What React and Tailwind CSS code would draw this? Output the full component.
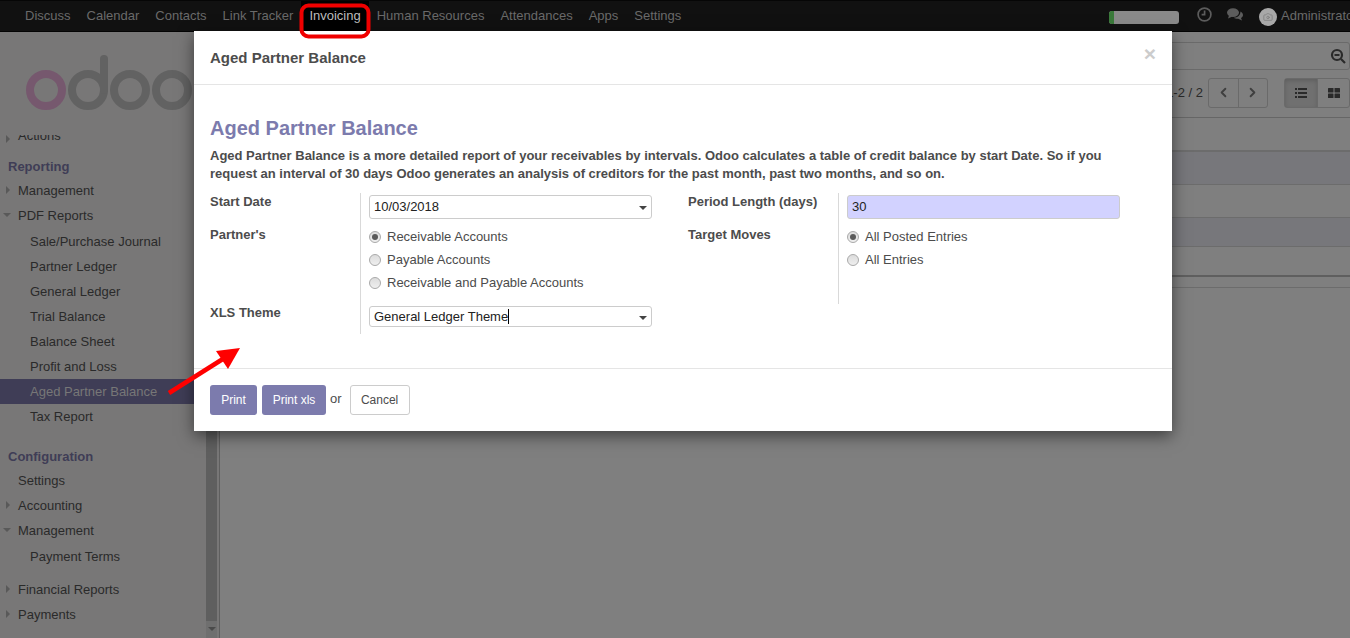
import React from "react";
import { ChevronLeft, ChevronRight, Camera } from "lucide-react";

const nav = ["Discuss","Calendar","Contacts","Link Tracker","Invoicing","Human Resources","Attendances","Apps","Settings"];

function Caret({ open }) {
  return open ? (
    <span className="absolute left-[3px] top-[10px] w-0 h-0 border-x-[4px] border-x-transparent border-t-[4px] border-t-[#595959]" />
  ) : (
    <span className="absolute left-[6px] top-[8px] w-0 h-0 border-y-[4px] border-y-transparent border-l-[4px] border-l-[#595959]" />
  );
}

function Item({ label, level = 0, caret, active, h = "h-[25px]", mt = "" }) {
  return (
    <div className={`relative flex items-center whitespace-nowrap ${h} ${mt} ${level === 2 ? "pl-[30px]" : "pl-[18px]"} ${active ? "bg-[#3f3d56] text-[#777777]" : "text-[#2a2a2a]"}`}>
      {caret && <Caret open={caret === "open"} />}
      {label}
    </div>
  );
}

function Head({ children, mt }) {
  return <div className={`h-[24px] pl-[8px] pt-[2px] flex items-center font-bold text-[#3f3d56] ${mt}`}>{children}</div>;
}

function Radio({ checked, label }) {
  return (
    <label className="flex items-center h-[23px] gap-[6px] text-[#4c4c4c]">
      <span className="w-[12px] h-[12px] rounded-full border border-[#a9a9a9] bg-gradient-to-b from-[#dcdcdc] to-[#efefef] flex items-center justify-center">
        {checked && <span className="w-[6px] h-[6px] rounded-full bg-[#5a5a5a]" />}
      </span>
      {label}
    </label>
  );
}

function SelectBox({ value, cursor, h }) {
  return (
    <div className={`relative flex items-center w-[283px] ${h} border border-[#cccccc] rounded-[3px] pl-[4px] text-[#222222]`}>
      <span>{value}</span>
      {cursor && <span className="w-px h-[15px] bg-black" />}
      <span className="absolute right-[4px] top-1/2 -translate-y-px w-0 h-0 border-x-[4px] border-x-transparent border-t-[4px] border-t-[#444444]" />
    </div>
  );
}

export default function App() {
  return (
    <div className="relative w-[1350px] h-[638px] overflow-hidden bg-[#7f7f7f] text-[13px] leading-[18px] font-['Liberation_Sans',Arial,sans-serif]">
      <header className="flex items-center h-[32px] bg-[#111111] border-b border-[#040404] border-t border-t-[#060606] pl-[17px]">
        {nav.map((n) => (
          <div key={n} className={`h-full flex items-center px-[8px] pb-[1px] ${n === "Invoicing" ? "bg-black text-[#bdbdbd]" : "text-[#6a6a6a]"}`}>{n}</div>
        ))}
        <div className="ml-auto flex items-center h-full w-[241px] shrink-0 overflow-hidden">
          <div className="w-[70px] h-[13px] rounded-[3px] bg-[#8a8a8a] overflow-hidden shrink-0 mt-[2px]">
            <div className="w-[5px] h-full bg-[#3a7a3a]" />
          </div>
          <svg width="15" height="15" viewBox="0 0 15 15" fill="none" stroke="#5c5c5c" strokeWidth="1.7" className="ml-[18px] mb-[3px] shrink-0">
            <circle cx="7.5" cy="7.5" r="6.4" />
            <path d="M7.6 3.5v4.2H4.6" />
          </svg>
          <svg width="16" height="14" viewBox="0 0 16 14" className="ml-[15px] mb-[3px] shrink-0">
            <ellipse cx="6" cy="4.6" rx="6" ry="4.4" fill="#5c5c5c" />
            <path d="M2 7.5L1 10.5L5.5 8.5Z" fill="#5c5c5c" />
            <path d="M13.4 3.6C15 4.4 16 5.6 16 7C16 8.3 15.1 9.3 14 10L15 12.6L11.2 10.8C9.6 10.9 8 10.4 6.8 9.7C10.6 9.6 13.6 7.4 13.4 3.6Z" fill="#5c5c5c" />
          </svg>
          <div className="ml-[16px] w-[18px] h-[18px] mt-[2px] rounded-full bg-[#a8a8a8] flex items-center justify-center shrink-0">
            <Camera size={10} className="text-[#7f7f7f]" />
          </div>
          <span className="ml-[4px] pb-[1px] text-[#6a6a6a] whitespace-nowrap">Administrator</span>
        </div>
      </header>

      <div className="flex h-[606px]">
        <aside className="relative w-[220px] shrink-0 bg-[#787777] border-r border-[#5f5f5f] flex flex-col overflow-hidden">
          <div className="h-[103px] shrink-0 pl-[26px] pt-[23px]">
            <svg width="190" height="60" viewBox="0 0 190 60" fill="none">
              <circle cx="20" cy="35" r="16" stroke="#76586e" strokeWidth="8" />
              <circle cx="62" cy="35" r="16" stroke="#626262" strokeWidth="8" />
              <path d="M78 35V4" stroke="#626262" strokeWidth="8" strokeLinecap="round" />
              <circle cx="104" cy="35" r="16" stroke="#626262" strokeWidth="8" />
              <circle cx="146" cy="35" r="16" stroke="#626262" strokeWidth="8" />
            </svg>
          </div>
          <div className="relative flex-1 overflow-hidden pr-[14px]">
            <div className="-mt-[8px]">
              <Item label="Actions" caret="closed" h="h-[18px]" />
            </div>
            <Head mt="mt-[9px]">Reporting</Head>
            <Item label="Management" caret="closed" />
            <Item label="PDF Reports" caret="open" />
            <Item label="Sale/Purchase Journal" level={2} mt="mt-px" />
            <Item label="Partner Ledger" level={2} />
            <Item label="General Ledger" level={2} />
            <Item label="Trial Balance" level={2} />
            <Item label="Balance Sheet" level={2} />
            <Item label="Profit and Loss" level={2} />
            <Item label="Aged Partner Balance" level={2} active />
            <Item label="Tax Report" level={2} />
            <Head mt="mt-[15px]">Configuration</Head>
            <Item label="Settings" />
            <Item label="Accounting" caret="closed" />
            <Item label="Management" caret="open" />
            <Item label="Payment Terms" level={2} mt="mt-px" />
            <div className="h-[8px]" />
            <Item label="Financial Reports" caret="closed" />
            <Item label="Payments" caret="closed" />
          </div>
          <div className="absolute right-[2px] top-[99px] bottom-0 w-[11px] bg-[#6f6f6f] flex flex-col">
            <div className="flex-1 mb-[17px] bg-[#5f5f5f]" />
          </div>
          <span className="absolute right-[3px] bottom-[7px] w-0 h-0 border-x-[4px] border-x-transparent border-t-[4px] border-t-[#4a4a4a]" />
        </aside>

        <main className="flex-1 min-w-0">
          <div className="h-[86px] border-b border-[#666666] flex flex-col items-end">
            <div className="mt-[10px] w-[300px] h-[28px] border border-[#6a6a6a] rounded-[3px] flex items-center justify-end pr-[3px]">
              <svg width="16" height="16" viewBox="0 0 16 16" fill="none" stroke="#2a2a2a" strokeWidth="2.2">
                <circle cx="7" cy="7" r="5" />
                <path d="M11 11l4 4M4.5 7h5" />
              </svg>
            </div>
            <div className="flex items-center mt-[7px] h-[31px]">
              <span className="mr-[5px] text-[#2a2a2a]">1-2 / 2</span>
              <div className="flex h-[30px] w-[60px] border border-[#6a6a6a] rounded-[3px] text-[#3f3f3f]">
                <div className="flex-1 flex items-center justify-center border-r border-[#6a6a6a]"><ChevronLeft size={15} strokeWidth={3} /></div>
                <div className="flex-1 flex items-center justify-center"><ChevronRight size={15} strokeWidth={3} /></div>
              </div>
              <div className="flex h-[30px] w-[66px] ml-[16px] border border-[#6a6a6a] rounded-[3px]">
                <div className="w-[33px] flex items-center justify-center border-r border-[#6a6a6a] bg-[#707070] shadow-[inset_0_2px_4px_rgba(0,0,0,0.15)]">
                  <svg width="12" height="10" viewBox="0 0 12 10" fill="#2a2a2a">
                    <rect x="0" y="0" width="2" height="2" />
                    <rect x="3" y="0" width="9" height="2" />
                    <rect x="0" y="4" width="2" height="2" />
                    <rect x="3" y="4" width="9" height="2" />
                    <rect x="0" y="8" width="2" height="2" />
                    <rect x="3" y="8" width="9" height="2" />
                  </svg>
                </div>
                <div className="flex-1 flex items-center justify-center">
                  <svg width="12" height="10" viewBox="0 0 12 10" fill="#2a2a2a">
                    <rect x="0" y="0" width="5.5" height="4.5" rx="0.5" />
                    <rect x="6.5" y="0" width="5.5" height="4.5" rx="0.5" />
                    <rect x="0" y="5.5" width="5.5" height="4.5" rx="0.5" />
                    <rect x="6.5" y="5.5" width="5.5" height="4.5" rx="0.5" />
                  </svg>
                </div>
              </div>
            </div>
          </div>
          <div className="h-[34px] border-b-2 border-[#6c6c6c]" />
          <div className="h-[33px] border-b border-[#6c6c6c] bg-[#77777b]" />
          <div className="h-[33px] border-b border-[#6c6c6c]" />
          <div className="h-[29px] border-b border-[#6c6c6c] bg-[#77777b]" />
          <div className="h-[30px] border-b-2 border-[#5f5f5f]" />
          <div className="h-[11px] border-b border-[#6c6c6c]" />
        </main>
      </div>

      <section className="absolute left-[194px] top-[31px] w-[978px] h-[400px] bg-white shadow-[0_5px_15px_rgba(0,0,0,0.5)] text-[#4c4c4c] flex flex-col">
        <div className="relative h-[54px] border-b border-[#e5e5e5] flex items-center pl-[16px]">
          <h4 className="text-[15px] font-bold">Aged Partner Balance</h4>
          <span className="absolute right-[16px] top-[12px] text-[21px] leading-[22px] font-bold text-[#cccccc]">×</span>
        </div>
        <div className="flex-1 px-[16px]">
          <h2 className="mt-[30px] text-[20px] leading-[26px] font-bold text-[#7c7bad]">Aged Partner Balance</h2>
          <p className="mt-[6px] font-bold w-[920px]">Aged Partner Balance is a more detailed report of your receivables by intervals. Odoo calculates a table of credit balance by start Date. So if you request an interval of 30 days Odoo generates an analysis of creditors for the past month, past two months, and so on.</p>
          <div className="flex mt-[10px]">
            <div className="w-[478px]">
              <div className="grid grid-cols-[150px_1fr]">
                <div className="font-bold">Start Date</div>
                <div className="border-l border-[#d9d9d9] pl-[8px] pt-[2px] h-[32px]"><SelectBox value="10/03/2018" h="h-[24px]" /></div>
                <div className="font-bold pt-px">Partner's</div>
                <div className="border-l border-[#d9d9d9] pl-[8px] h-[78px]"><Radio checked label="Receivable Accounts" /><Radio label="Payable Accounts" /><Radio label="Receivable and Payable Accounts" /></div>
                <div className="font-bold pt-px">XLS Theme</div>
                <div className="border-l border-[#d9d9d9] pl-[8px] h-[31px] pt-[3px]"><SelectBox value="General Ledger Theme" cursor h="h-[21px]" /></div>
              </div>
            </div>
            <div className="w-[432px]">
              <div className="grid grid-cols-[150px_1fr]">
                <div className="font-bold">Period Length (days)</div>
                <div className="border-l border-[#d9d9d9] pl-[8px] pt-[2px] h-[32px]">
                  <div className="w-[273px] h-[24px] rounded-[3px] bg-[#d2d2ff] border border-[#cccccc] flex items-center pl-[4px] text-[#222222]">30</div>
                </div>
                <div className="font-bold pt-px">Target Moves</div>
                <div className="border-l border-[#d9d9d9] pl-[8px] h-[79px]"><Radio checked label="All Posted Entries" /><Radio label="All Entries" /></div>
              </div>
            </div>
          </div>
        </div>
        <div className="h-[63px] border-t border-[#e5e5e5] flex items-center pl-[16px]">
          <button className="h-[30px] w-[47px] rounded-[3px] bg-[#7c7bad] text-white text-[12px]">Print</button>
          <button className="h-[30px] w-[64px] ml-[5px] rounded-[3px] bg-[#7c7bad] text-white text-[12px]">Print xls</button>
          <span className="ml-[4px] mb-[2px]">or</span>
          <button className="h-[30px] w-[60px] ml-[8px] rounded-[3px] border border-[#cccccc] bg-white text-[12px]">Cancel</button>
        </div>
      </section>

      <svg className="absolute left-0 top-0 pointer-events-none" width="1350" height="638" fill="none">
        <rect x="301.5" y="5.5" width="67" height="31" rx="7" stroke="#f00000" strokeWidth="4" />
        <path d="M169 393L226 357" stroke="#ff0000" strokeWidth="4.5" />
        <path d="M240 348L216 351L228 369Z" fill="#ff0000" />
      </svg>
    </div>
  );
}
